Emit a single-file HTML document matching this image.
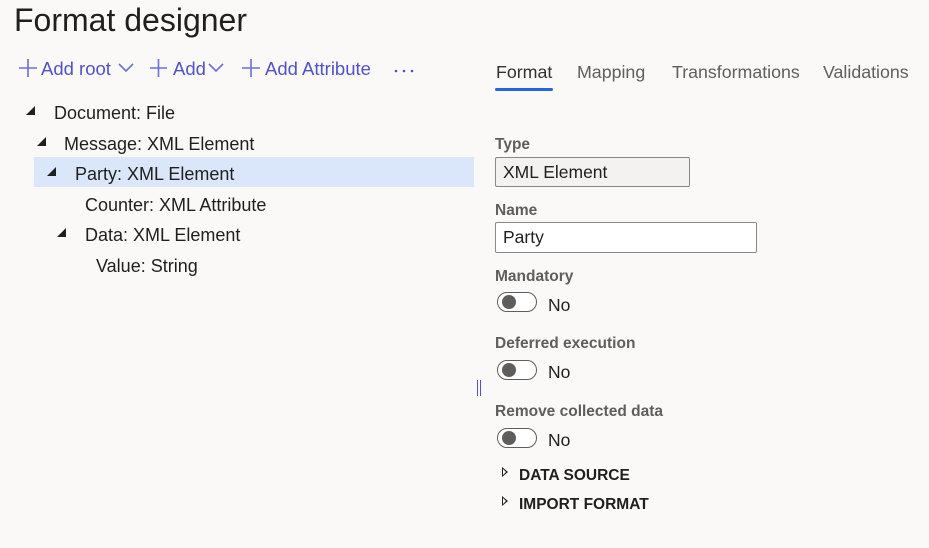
<!DOCTYPE html>
<html><head><meta charset="utf-8"><style>
body{margin:0;width:929px;height:548px;background:#faf9f8;font-family:"Liberation Sans",sans-serif;position:relative;overflow:hidden;color:#201f1e}
.a{position:absolute;white-space:nowrap}
.t{font-size:18px;line-height:20px}
.tb{color:#4f52c9;font-size:18.5px;line-height:20px}
.tab{color:#605e5c;font-size:17.8px;line-height:20px}
.lbl{color:#605e5c;font-size:15.5px;font-weight:bold;line-height:20px}
.tri{position:absolute;width:0;height:0;border-left:9px solid transparent;border-bottom:9px solid #201f1e}
.tg{position:absolute;left:497px;width:38px;height:18px;border:1px solid #605e5c;border-radius:10px;background:#fff}
.tg:after{content:"";position:absolute;left:4px;top:2px;width:14px;height:14px;border-radius:50%;background:#605e5c}
.no{left:548px;font-size:17.5px}
.box{position:absolute;left:495px;border:1px solid #8a8886;border-radius:2px;box-sizing:border-box;font-size:17.5px;padding-left:7px;line-height:28px}
.sec{font-weight:bold;font-size:15.5px;left:519px}
.ot{position:absolute;left:502px;width:0;height:0;border-top:5px solid transparent;border-bottom:5px solid transparent;border-left:6px solid #201f1e}
.ot:after{content:"";position:absolute;left:-5px;top:-3px;border-top:3px solid transparent;border-bottom:3px solid transparent;border-left:3.5px solid #faf9f8}
</style></head><body>
<div class="a" style="left:14px;top:1px;font-size:32px;line-height:38px">Format designer</div>

<svg class="a" style="left:16px;top:57px" width="400" height="22">
<g stroke="#6a6fd6" stroke-width="1.6" fill="none">
<path d="M3 11H21M12 2V20"/><path d="M103 7L110 14L117 7"/>
<path d="M134 11H151M142.5 2V20"/><path d="M193 7L200 14L207 7"/>
<path d="M226 11H244M235 2V20"/>
</g>
<g fill="#4f52c9"><circle cx="380" cy="14" r="1.3"/><circle cx="388" cy="14" r="1.3"/><circle cx="396" cy="14" r="1.3"/></g>
</svg>
<div class="a tb" style="left:41px;top:59px">Add root</div>
<div class="a tb" style="left:173px;top:59px">Add</div>
<div class="a tb" style="left:265px;top:59px">Add Attribute</div>

<div class="a" style="left:34px;top:157px;width:440px;height:30px;background:#dae6fa"></div>
<div class="tri" style="left:26px;top:106px"></div>
<div class="a t" style="left:54px;top:103px">Document: File</div>
<div class="tri" style="left:37px;top:137px"></div>
<div class="a t" style="left:64px;top:134px">Message: XML Element</div>
<div class="tri" style="left:47px;top:167px"></div>
<div class="a t" style="left:75px;top:164px">Party: XML Element</div>
<div class="a t" style="left:85px;top:195px">Counter: XML Attribute</div>
<div class="tri" style="left:57px;top:228px"></div>
<div class="a t" style="left:85px;top:225px">Data: XML Element</div>
<div class="a t" style="left:96px;top:256px">Value: String</div>

<div class="a" style="left:477px;top:380px;width:1px;height:16px;background:#4f52c9"></div>
<div class="a" style="left:480px;top:380px;width:1px;height:16px;background:#4f52c9"></div>

<div class="a tab" style="left:496px;top:62px;color:#323130">Format</div>
<div class="a" style="left:495px;top:88px;width:58px;height:3px;background:#2266e3;border-radius:2px"></div>
<div class="a tab" style="left:577px;top:62px">Mapping</div>
<div class="a tab" style="left:672px;top:62px">Transformations</div>
<div class="a tab" style="left:823px;top:62px">Validations</div>

<div class="a lbl" style="left:495px;top:135px">Type</div>
<div class="box" style="top:157px;width:195px;height:30px;background:#f3f2f1">XML Element</div>
<div class="a lbl" style="left:495px;top:201px">Name</div>
<div class="box" style="top:222px;width:262px;height:31px;background:#fff">Party</div>

<div class="a lbl" style="left:495px;top:267px">Mandatory</div>
<div class="tg" style="top:292px"></div>
<div class="a no" style="top:295px">No</div>
<div class="a lbl" style="left:495px;top:334px">Deferred execution</div>
<div class="tg" style="top:360px"></div>
<div class="a no" style="top:362px">No</div>
<div class="a lbl" style="left:495px;top:402px">Remove collected data</div>
<div class="tg" style="top:428px"></div>
<div class="a no" style="top:430px">No</div>

<div class="ot" style="top:467px"></div>
<div class="a sec" style="top:467px">DATA SOURCE</div>
<div class="ot" style="top:496px"></div>
<div class="a sec" style="top:496px">IMPORT FORMAT</div>
</body></html>
